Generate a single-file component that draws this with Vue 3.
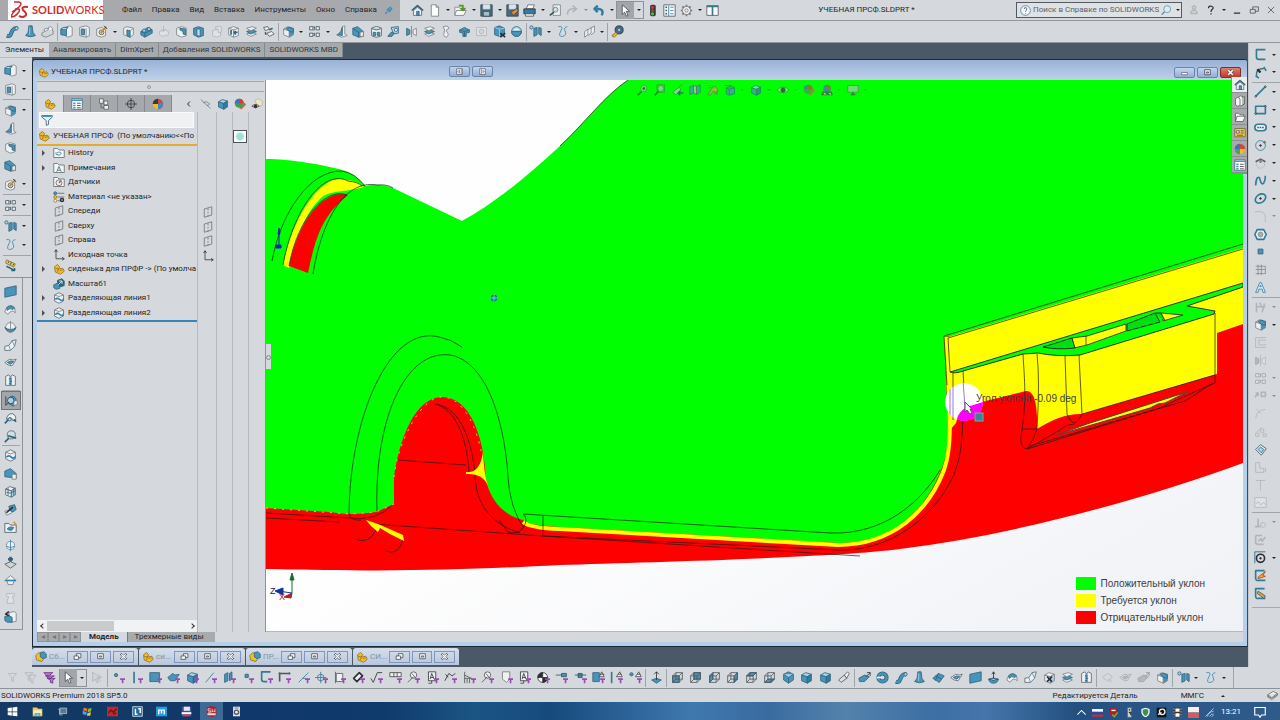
<script setup>
const D = '#32617a'
const B = '#4795bb'
const L = '#a8d3e6'
const W = '#eef1f3'
const K = '#2b2f33'
const G = '#7b8084'
const Y = '#f0bd2e'

const p = (d, fill = 'none', stroke = D, w = 1) =>
  `<path d="${d}" fill="${fill}" stroke="${stroke}" stroke-width="${w}" stroke-linejoin="round"/>`
const c = (x, y, r, fill = 'none', stroke = D, w = 1) =>
  `<circle cx="${x}" cy="${y}" r="${r}" fill="${fill}" stroke="${stroke}" stroke-width="${w}"/>`
const cube = (front, top, side, stroke = D) =>
  p('M2 5L9 7V15L2 12Z', front, stroke) + p('M2 5L7 2L14 4L9 7Z', top, stroke) + p('M9 7L14 4V12L9 15Z', side, stroke)
const wire = (extra) =>
  extra + p('M2 6H10V14H2ZM6 2H14V10H6ZM2 6L6 2M10 6L14 2M10 14L14 10M2 14L6 10', 'none', '#51575c')
const tag = '<path d="M10 9H16V11H14V15H12V11H10Z" fill="#9a4bb3"/>'

const icons = {
  sweep: p('M1 13C9 16 4 3 14 4', 'none', D, 5) + p('M1 13C9 16 4 3 14 4', 'none', B, 3) + c(13, 4, 2, L),
  loft: p('M6 1H10L11 9L14 13Q8 16 2 13L5 9Z', B) + p('M7 3V12', 'none', L),
  flange: p('M1 10L10 5L15 7V11L6 15L1 13Z', '#d3d6d8', G) + p('M4 8V5L7 4L9 5M9 6V3L12 2L14 4V7', W, G),
  extrude: p('M6 3L12 1L15 3V13L10 15L6 13Z', W, G) + p('M1 5L8 4V13L1 12Z', B) + p('M1 5L4 3L10 3L8 5', L),
  hole: p('M2 3L10 1L14 3V13L10 15L2 13Z', W, G) + p('M4 5H8V12H4Z', B) + p('M10 4V15', 'none', G),
  wizard: p('M2 5L8 3L13 6V13L8 15L2 13Z', W, G) + c(8, 9, 3, '#cfd5d8', '#555') + p('M7 10L14 2', 'none', '#c98b24', 2) + p('M11 1L15 5', 'none', K),
  blockA: p('M2 4L6 2L14 4V12L10 15L2 12Z', W, G) + p('M6 6L10 7V15L6 13Z', B) + p('M10 7L14 4', 'none', G),
  brick: p('M1 8L10 3L15 6V10L6 15L1 12Z', B) + p('M1 8L6 10L15 6M6 10V15', 'none', D) + c(5, 7, 2, L) + c(11, 5, 2, L),
  pushdown: p('M3 8L10 6L14 8V12L7 14L3 12Z', W, G) + p('M8 1V8M5 5L8 8L11 5', 'none', G),
  cutA: p('M2 4L8 2L14 4V13L8 15L2 12Z', W, G) + p('M6 4L13 5V12L10 11V8L6 6Z', B),
  cutB: p('M2 4L8 2L14 4V13L8 15L2 12Z', B) + p('M6 5H10V14L6 13Z', '#d5dadd', D),
  cutC: p('M3 7L9 5L13 7V13L8 15L3 13Z', W, G) + p('M7 2H14V9H10V5H7Z', W, G),
  lattice: p('M2 4L8 2L14 4V13L8 15L2 12Z', W, G) + p('M2 4L8 6L14 4M8 6V15', 'none', G) + p('M10 7V12M8 9H13M5 6V12', 'none', D, 2),
  stack: p('M2 11L9 9L14 11L7 14Z', W, G) + p('M2 8L9 6L14 8L7 11Z', B) + p('M2 4L9 2L14 4L7 7Z', W, G),
  move: p('M2 3L7 2L9 5L4 7ZM6 10L12 8L15 11L9 14Z', W, '#555') + p('M9 6L13 4M4 9L5 12', 'none', D, 2),
  fillet: cube(W, W, B, G) + p('M5 4Q10 1 14 5V9L9 8Z', B),
  pattern: p('M2 2H6V6H2ZM2 10H6V14H2ZM10 2H14V6H10ZM10 10H14V14H10Z', W, '#4a5055') + p('M6 3L8 2V6H6M6 11L8 10V13H6', L, D),
  rib: p('M2 12L8 10L9 2L12 1V11L15 13L8 15Z', W, G) + p('M3 12Q8 9 9 3V13Z', B),
  draft: p('M1 4L7 2L14 8V14L8 15L1 12Z', B) + p('M1 4L8 9V15M8 9L14 8', 'none', D) + p('M10 9L14 8V14L10 14Z', W, G),
  shell: p('M2 4Q8 0 14 4V13Q8 17 2 13Z', W, '#555') + p('M2 4Q8 8 14 4', L, '#555') + p('M4 9H7V13H4ZM9 9H12V13H9Z', B),
  wrap: p('M5 3L14 2V10L8 11Z', L) + p('M1 14L5 9L9 10L6 14Z', B) + c(11, 6, 2, W),
  mirror: p('M14 4V13L10 11V6Z', W, G) + p('M2 4V13L6 11V6Z', B) + p('M8 1V15', 'none', G),
  flex: p('M4 2Q10 0 11 4Q6 6 9 9Q12 12 8 15Q3 14 5 10Q7 6 4 2Z', W, G),
  dome: p('M2 6L8 3L14 6V9L10 10V14H6V10L2 9Z', B) + p('M2 6L8 8L14 6M8 8V14', 'none', D),
  ring: p('M2 3H14V13H2Z', W, G) + c(8, 8, 3, '#ccc', G),
  deleteFace: p('M2 3L8 1L14 4V12L8 14L2 12Z', B) + p('M2 3L8 5L14 4M8 5V14', 'none', L) + p('M9 10L15 15M15 10L9 15', 'none', K, 2),
  sphere: c(8, 8, 6, L) + p('M2 8A6 6 0 0 0 14 8Z', B) + p('M4 6Q8 1 12 6', W, L),
  ref: c(3, 3, 2, L) + p('M6 4V14L10 12V3ZM12 3V11L15 13V4Z', B),
  curve: p('M3 2Q10 1 6 7Q2 15 8 14Q14 13 11 7Q9 3 14 2', 'none', '#3282ad', 1),
  split3: p('M2 8L6 5V12L2 15ZM6 6L10 3V10L6 13M10 4L14 1V9L10 12', W, G),
  instant: c(10, 6, 5, '#426b88', '#333') + c(10, 6, 2, L) + p('M1 13L6 9L8 11L4 15Z', Y, '#7f6517'),
  ruler: p('M3 1L14 6L12 10L2 5Z', '#e9c965', '#8c7430') + p('M6 3L5 5M9 4L8 7M12 6L11 8', 'none', K) + p('M3 9L13 14M13 11V14H9', 'none', D, 2),
  plane: p('M1 4L15 1V12L1 15Z', B),
  sheet: p('M3 6Q8 1 13 6L14 12Q9 7 5 14L1 11Z', W, G) + p('M3 6Q8 1 13 6L11 8Q7 5 4 9Z', B),
  spin: c(8, 8, 6, W, G) + p('M1 8Q8 13 15 8L13 11Q8 15 3 11Z', B) + p('M8 0V15', 'none', G),
  bend: p('M1 9L6 8L10 2L15 1L13 9L8 14H1Z', W, '#5c656a') + p('M6 8L8 14M10 2L13 9', 'none', B),
  patch: p('M1 8L7 4L11 5L15 4L10 12L5 11Z', W, '#5c656a') + p('M4 8L8 6L12 7L8 10Z', B),
  zip: p('M2 3L6 1L8 4L10 1L14 3V14H2Z', W, '#5c656a') + p('M8 4V14', 'none', B, 3) + p('M6 6H9M7 9H10M6 12H9', 'none', D),
  analysis: p('M5 5Q9 0 13 5L15 11L10 15L5 12Z', B) + c(7, 8, 4, L, '#334') + p('M1 14L5 10M1 3V14', 'none', K, 1) + p('M11 9L15 8V13L11 14Z', W, G),
  magnet: p('M3 9Q4 2 10 2Q16 4 14 11L10 10Q10 6 7 8Z', W, '#4c5960') + p('M1 14L8 7M12 9L15 12', 'none', D, 2) + c(7, 9, 2, L),
  magnify: c(9, 6, 5, '#cfe1e8', '#5c656a') + p('M1 15L6 10M5 7L15 10', 'none', D, 2),
  splitLine: p('M2 4L8 1L14 4V12L8 15L2 12Z', W, '#5c656a') + p('M2 4L8 6L14 4', 'none', '#777') + p('M3 10Q6 7 9 10T14 9', 'none', '#3282ad', 2),
  wedge: p('M1 5L8 2L15 8V14L10 13L1 12Z', B) + p('M10 9H15V15H10Z', W, G),
  box3: cube(W, W, L, '#59636a') + p('M5 4V13M12 4V13M3 9L8 10L14 7', 'none', D),
  pipe: p('M1 10L8 8L10 12L3 15Z', W, G) + p('M6 4L13 2L15 8L11 11L7 9Z', B) + p('M3 12L11 5', 'none', K, 2),
  folder: p('M1 3H6L8 5H15V14H1Z', W, '#4c5960') + p('M4 10Q6 6 12 8Q10 13 6 11Z', B) + p('M12 1L15 5', 'none', '#df8f28', 2),
  pencilSphere: c(8, 8, 5, W, G) + p('M8 1V15M3 9Q8 12 13 9', 'none', '#3282ad'),
  press: p('M1 10L8 7L15 10L8 15Z', '#cfd4d7', '#555') + p('M8 1V7M5 4H11', 'none', D, 3),
  equator: p('M8 2L13 6L11 13L5 13L3 6Z', W, G) + p('M1 8H15', 'none', '#3282ad', 2),
  phone: p('M3 2H13V5L10 6L12 10V14H4V10L6 6L3 5Z', W, G),
  importBody: p('M6 3L13 2L15 4V14L8 15Z', W, G) + p('M1 8L6 7L10 9V15H4L1 13Z', B) + p('M6 2L2 5L6 7', 'none', K, 2),

  home: p('M3 8L8 4L13 8V14H3Z', W, '#536773') + p('M7 9H10V14H7Z', B) + p('M1 8L8 2L15 8', 'none', D, 2),
  page: p('M4 1H10L13 4V15H4Z', '#fbfcfc', '#777') + p('M10 1V4H13', 'none', '#777'),
  open: p('M1 14V4H6L8 6H13V8', W, '#888') + p('M3 8H15L12 14H1Z', '#fafbfb', '#777') + p('M6 2H11V7M8 5L11 8L14 5', 'none', '#53981d', 2),
  save: p('M1 1H15V15H1Z', '#456d82', '#34454e') + p('M4 1H12V6H4Z', '#dce4e8', '#dce4e8') + p('M4 9H12V15H4Z', '#a8bac3', '#34454e'),
  saveAll: p('M1 1H15V15H1Z', '#456d82', '#34454e') + p('M4 1H12V6H4Z', '#dce4e8', '#dce4e8') + p('M6 10L14 5L15 9L9 14Z', '#d28b45', '#52402b'),
  print: p('M4 6L6 1H14L12 6Z', '#f8f9f9', '#666') + p('M1 6H15V12H1Z', '#347c9d', K) + p('M3 12H13V15H3Z', W, '#555'),
  preview: p('M5 1H14V14H5Z', W, G) + c(8, 7, 3, '#cbdde5', '#677') + p('M1 14L6 10', 'none', '#355', 2),
  redo: p('M2 13Q1 5 12 6M8 2L13 6L8 10', 'none', G, 2),
  undo: p('M12 14Q16 5 4 6M7 2L3 6L7 10', 'none', '#347da2', 3),
  cursor: p('M4 1V13L7 10L9 15L11 14L9 9H13Z', '#fff', '#464b4f'),
  cursorOff: p('M2 1V13L5 10L7 14H9L7 9H11ZM8 3L13 8L9 8L12 13', '#cfcfd1', G),
  lights: '<rect x="5" y="1" width="7" height="14" rx="2" fill="#393635"/><circle cx="8" cy="4" r="2" fill="#d53434"/><circle cx="8" cy="8" r="2" fill="#765827"/><circle cx="8" cy="12" r="2" fill="#55b83f"/>',
  listing: p('M1 1H15V15H1Z', '#f7f8f8', '#555') + p('M7 2V15M9 4H13M9 8H13M9 12H13', 'none', '#3778aa') + p('M3 4H5M3 8H5M3 12H5', 'none', '#315a76', 2),
  gear: c(8, 8, 5, W, '#777', 1) + c(8, 8, 2, 'none', '#777') + p('M8 1V3M8 13V15M1 8H3M13 8H15M3 3L5 5M11 11L13 13M13 3L11 5M3 13L5 11', 'none', '#777', 2),
  panes: p('M1 2H15V14H1Z', '#fafafa', '#555') + p('M1 3H15M8 2V14', 'none', '#397793', 2),
  pin: p('M2 14L7 9M5 5L11 11M7 6L11 2L14 5L10 9Z', '#56a3c4', '#3b8cb3', 2),
  help: c(8, 8, 7, '#f7f9fa', '#2b6d92') + p('M6 6Q6 3 9 4Q11 5 9 8Q8 9 8 10M8 12V13', 'none', '#234', 1),
  search: c(9, 6, 5, '#d8edf6', '#56839a') + p('M1 14L5 10', 'none', '#56839a', 2),
  user: c(8, 4, 3, '#ccc', '#999') + p('M3 14Q2 8 8 8Q14 8 13 14Z', '#ccc', '#999'),
  question: p('M4 5Q4 1 9 2Q14 4 9 8Q8 9 8 11M8 13V15', 'none', K, 2),
  minimize: p('M3 13H13', 'none', K, 2),
  restore: p('M2 7H10V13H2ZM6 7V3H15V10H10', 'none', K),
  close: p('M3 3L13 13M13 3L3 13', 'none', K),

  part: p('M2 5L6 2L9 5L7 8L13 7L15 11L10 15L3 12Z', Y, '#8c6b12') + p('M3 7L7 8M7 8L6 12M9 10L13 9', 'none', '#8c6b12'),
  assembly: p('M1 6L5 2L9 5L7 8L12 10L9 14L2 12Z', Y, '#8c6b12') + p('M7 2L12 1L15 4V9L10 10L7 7Z', B),
  props: p('M1 1H15V15H1Z', '#fff', '#3c6680') + p('M1 3H15', 'none', B, 2) + p('M8 7H13M8 10H13M8 13H13', 'none', '#333') + p('M3 7H6M3 10H6M3 13H6', 'none', B, 2),
  config: p('M2 1H7V7H2ZM8 4H13V9H8ZM8 10H14V15H8Z', W, '#555') + p('M4 7V13H8', 'none', '#555'),
  target: c(8, 8, 5, 'none', K, 1) + p('M8 0V16M0 8H16', 'none', K, 1),
  ball: '<circle cx="8" cy="8" r="7" fill="#d84639"/><path d="M8 8V1A7 7 0 0 0 1 8Z" fill="#333b45"/><path d="M1 8A7 7 0 0 0 8 15V8Z" fill="#f0bd2e"/><path d="M8 15A7 7 0 0 0 14 5L8 8Z" fill="#4386c5"/>',
  ballPane: '<circle cx="8" cy="8" r="7" fill="#d84639"/><path d="M8 8V1A7 7 0 0 0 1 8Z" fill="#3c74b8"/><path d="M1 8A7 7 0 0 0 8 15V8Z" fill="#49a55a"/><path d="M8 15A7 7 0 0 0 15 8H8Z" fill="#f0bd2e"/>',
  chevron: p('M10 3L5 8L10 13', 'none', K, 2),
  hide: p('M1 2L14 14M4 6Q9 3 13 8Q11 10 9 10', 'none', '#707579'),
  cubeBlue: cube(B, L, '#2f7da5'),
  paint: '<circle cx="7" cy="7" r="6" fill="#3d9d58"/><path d="M7 1A6 6 0 0 0 1 7H7Z" fill="#3c74b8"/><path d="M7 7V1A6 6 0 0 1 13 7Z" fill="#d53e30"/><path d="M7 14L14 6L16 9L10 15Z" fill="#b7713b"/>',
  eyeBox: p('M5 3L10 1L15 4V10L9 11Z', '#efe4c0', '#b8b09a') + p('M1 11Q6 6 11 11Q6 15 1 11Z', W, '#444') + c(6, 11, 2, K, K),
  funnel: p('M1 2H15V4L10 9V14L7 15V9L1 4Z', '#e6f4fa', '#24566f') + p('M2 3H14', 'none', B, 2),
  history: p('M1 2H6L8 4H15V14H1Z', '#f5f6f6', '#5a6064') + p('M5 8Q8 5 11 8Q10 12 6 11M4 7V10H7', 'none', '#3583a9', 1),
  notes: p('M1 2H6L8 4H15V14H1Z', '#f5f6f6', '#5a6064') + p('M5 13L8 6L11 13M6 11H10', 'none', '#28627e', 1),
  sensor: p('M1 2H6L8 4H15V14H1Z', '#f5f6f6', '#5a6064') + c(8, 9, 4, W, '#555') + p('M8 9L10 7', 'none', '#c22', 2),
  material: c(3, 3, 2, B) + c(3, 8, 2, Y, '#a07015') + c(3, 13, 2, W, '#a07015') + p('M6 3H15M6 8H15M6 13H9', 'none', '#555') + c(12, 12, 2, W, K, 2),
  planeRef: p('M3 4L13 1V12L3 15ZM8 3V6M8 8V10M8 12V14', 'none', '#666c70'),
  origin: p('M4 1V13H15M2 4L4 1L6 4M12 11L15 13L12 15', 'none', K, 1),
  scale: p('M1 9L6 7L9 10V14L4 15L1 13Z', B) + p('M6 3L12 1L15 4V10L10 12L6 7Z', '#286686') + p('M7 9L12 4M8 4H12V8', 'none', '#fff', 1),

  sketch: p('M14 2H3V11Q3 14 6 14H14', 'none', '#347995', 2),
  dimension: p('M3 12Q2 3 12 3M2 12L6 15M12 1L15 6', 'none', '#347995', 2) + p('M4 4L8 8', 'none', K, 3),
  line: p('M2 14L14 2', 'none', '#347995', 2) + c(2, 14, 1, W, K) + c(14, 2, 1, W, K),
  rect: p('M2 4H14V13H2Z', 'none', '#347995', 2) + c(2, 13, 1, W, K) + c(14, 4, 1, W, K),
  slot: p('M5 4H11A4 4 0 0 1 11 12H5A4 4 0 0 1 5 4Z', W, '#347995', 2) + p('M5 7V9M11 7V9M7 8H9', 'none', '#555', 2),
  circle: c(8, 8, 6, 'none', '#347995', 1) + c(8, 8, 1, K, K) + c(13, 4, 1, W, K),
  arc: p('M2 7L8 4L14 7', 'none', '#555', 2) + '<circle cx="8" cy="10" r="5" fill="none" stroke="#aaa" stroke-dasharray="2 1"/>' + c(8, 7, 1, L, '#555'),
  spline: p('M2 14Q3 1 7 5Q9 15 12 11Q14 8 14 2', 'none', '#347995', 2),
  ellipse: '<ellipse cx="8" cy="8" rx="7" ry="5" transform="rotate(-35 8 8)" fill="none" stroke="#347995" stroke-width="2"/>' + c(8, 8, 1, K, K),
  corner: p('M1 2H7Q14 2 14 10V15', 'none', G, 1),
  polygon: p('M4 2H12L15 8L12 14H4L1 8Z', '#e9f3f7', '#347995', 2) + c(8, 8, 3, '#a8afb3', '#888'),
  point: p('M5 5H11V11H5Z', B),
  gridPlane: p('M2 4H14V13H2M5 2V15M9 2V15M2 8H14', 'none', '#888'),
  letter: p('M2 14L7 2H9L14 14H11L10 10H6L5 14ZM7 7H9L8 5Z', '#d9edf5', '#3a7fa0'),
  trim: p('M3 2V14M2 7H14M7 2L9 6M10 14L13 3', 'none', G, 2),
  offset: p('M15 2H2V14H15M15 5H6V11H15', 'none', G, 1),
  moveSketch: p('M1 10L5 5M2 5H5V9M9 4H14V9H9Z', 'none', G, 2),
  tangent: p('M2 14Q3 4 14 3M3 3L9 8', 'none', G),
  nodes: p('M2 10H6V14H2ZM8 5H12V9H8ZM11 11H15V14H11ZM3 9L10 3', 'none', G),
  diamond: p('M2 8L8 2L15 7L9 15Z', '#e5eff3', '#345565') + p('M5 8L8 5L12 8L9 12Z', L),
  lshape: p('M2 2H7V9H12V14H2ZM14 8V14', 'none', G),
  tee: p('M2 3H14M8 3V15', 'none', G),
  image: p('M1 2H15V14H1ZM2 10L5 7L8 11L12 8L15 11', W, G),
  relation: p('M1 13H8M5 3V13', 'none', G, 2) + c(11, 11, 3, 'none', G),
  repair: p('M2 3H10M2 3V13L5 14H12M5 10L9 7L10 10L14 5', 'none', G, 2),
  quickSnap: p('M1 15V1H14', 'none', '#245e7a', 1) + c(8, 9, 5, 'none', K, 2) + c(8, 9, 1, K, K),
  rapid: p('M13 2H2V11Q2 15 6 14H14', 'none', '#347995', 2) + p('M5 10L14 3L11 8L14 9L5 12Z', '#f4a63a', '#9e4c17'),
  sketchMeasure: p('M13 2H2V11Q2 15 6 14H14', 'none', '#347995', 2) + p('M5 5L14 11L12 14L4 8Z', '#cba54a', '#555'),

  funnelGray: p('M3 3H13L9 8V13L7 12V8Z', '#d8dadd', G),
  funnelPair: p('M1 2H11L7 7V12L5 11V7ZM5 5H15L11 10V15L9 14V10Z', '#d8dadd', G),
  funnelAll: p('M1 2H12L7 6H5ZM3 6H14L9 9H7ZM5 9H15L12 11V15L9 14V11Z', '#b07cc4', '#702b8c'),
  fVertex: c(5, 5, 2, B) + tag,
  fEdge: p('M5 1V15', 'none', '#347995', 2) + tag,
  fFace: p('M1 2H13V13H1Z', B) + tag,
  fSurface: p('M1 8L7 3L10 5L15 4L10 12L4 12Z', B) + tag,
  fBody: cube(B, L, '#2f7da5') + tag,
  fAxis: p('M2 14L12 2', 'none', '#347995', 1) + tag,
  fPlane: p('M2 4V14L6 12V2ZM8 3V12L11 10V1Z', B) + tag,
  fPoint: p('M5 4H9V8H5Z', B) + tag,
  fSketch: p('M13 1H2V10Q2 13 5 13H9', 'none', '#347995', 2) + tag,
  fSegment: p('M2 13V3H14', 'none', '#555', 2) + c(2, 3, 1, B) + c(14, 3, 1, B) + tag,
  fMid: p('M2 14L14 2M7 9H11', 'none', '#347995', 1) + tag,
  fCenter: c(7, 8, 4, 'none', '#347995') + p('M7 1V15M0 8H14', 'none', '#347995') + tag,
  fDatum: p('M3 1V15M4 3H12V13H4Z', W, '#555') + tag,
  fDim: p('M2 9L9 2L13 6L6 13Z', W, K, 2) + tag,
  fFinish: p('M1 9L4 14L9 2H15', 'none', K, 1) + tag,
  fTol: p('M1 2H15V7H1ZM6 2V7M10 2V7', W, '#444') + tag,
  fWeld: c(8, 5, 4, W, '#555') + p('M1 14L8 7M6 3L11 9', 'none', '#555') + tag,
  fNote: p('M3 1H12V12H3ZM7 12V15H3', W, '#333') + p('M5 10L7 3L10 10M6 8H9', 'none', K) + tag,
  fThread: p('M1 12L6 3L10 6L14 3M2 4L5 8', 'none', K, 1) + tag,
  fHatch: p('M2 1V15M2 5L10 9M5 15V9M8 15V9M2 9H11', 'none', '#555') + tag,
  fBlock: p('M3 1H12V10L8 14L3 10Z', W, '#777') + tag,
  fCog: c(7, 8, 6, '#fff', K) + p('M7 8V2A6 6 0 0 0 1 8ZM7 8V14A6 6 0 0 0 13 8Z', K, K) + tag,
  fConn: p('M1 5H8M8 3H14V7H8Z', B, '#34505f', 1) + tag,
  fConn2: p('M1 5H15M5 3H10V8H5Z', B, '#34505f', 1) + tag,
  fMate: p('M1 2H9V13H1Z', B) + p('M12 1L15 7H9ZM10 4H15', W, '#444') + tag,
  fMate2: p('M2 1V15', 'none', '#347995', 2) + p('M12 1L15 7H8ZM10 4H14', W, '#444') + tag,
  fMate3: c(3, 4, 2, B) + p('M12 1L15 7H8ZM10 4H14', W, '#444') + tag,
  normal: p('M2 11L8 9L14 11L8 15Z', B) + p('M8 11V1M5 4L8 1L11 4', 'none', K),
  vFront: wire(p('M2 6H10V14H2Z', B)),
  vBack: wire(p('M6 2H14V10H6Z', B)),
  vLeft: wire(p('M2 6L6 2V10L2 14Z', B)),
  vRight: wire(p('M10 6L14 2V10L10 14Z', B)),
  vTop: wire(p('M2 6L6 2H14L10 6Z', B)),
  vBottom: wire(p('M2 14L6 10H14L10 14Z', B)),
  iso: p('M8 1L14 4V11L8 15L2 11V4Z', B) + p('M2 4L8 8L14 4M8 8V15', L, D),
  camera: p('M2 11L9 5L12 9L5 14Z', '#dedfe1', '#555') + p('M9 5L13 1L15 3L12 9Z', W, '#555'),
  sExtrude: p('M1 9L8 5L14 7L8 13L2 13Z', B) + p('M10 7L15 2M11 2H15V6', 'none', K, 1),
  sRevolve: c(8, 8, 5, 'none', D, 5) + c(8, 8, 5, 'none', B, 3) + p('M1 8H7', 'none', W, 2),
  sFill: p('M1 9L8 3L15 6L9 14Z', B) + p('M4 6L12 10M8 3L4 12', 'none', D),
  sCap: p('M2 10Q8 7 14 10Q13 15 8 15Q3 15 2 10Z', B) + p('M2 10Q8 13 14 10M8 1V9M6 4L8 1L10 4', W, K),
  sDelete: cube(W, W, L, G) + p('M5 7L11 13M11 7L5 13', 'none', K, 2),
  sMove: p('M2 8L8 3L14 7L9 13ZM8 9L14 14', '#ddd', G),

  viewBox: p('M3 5L10 3L14 5V13L7 15L3 13Z', B) + p('M3 5L7 7L14 5M7 7V15', 'none', D) + p('M1 2H10', 'none', '#555'),
  viewEye: p('M0 8Q8 0 16 8Q8 15 0 8Z', '#cdd8ce', '#46724f') + c(8, 8, 3, '#24502b', '#24502b'),
  viewPen: p('M1 14L8 4L11 3L14 7L13 14L9 9L4 15Z', '#c3ad4a', '#626443') + p('M2 2H8M1 5H6M10 14L14 9', 'none', '#666'),
  zoomFit: c(9, 6, 4, '#b8d8bf', '#47744f') + p('M1 15L6 10M7 6H11M9 4V8', 'none', '#31583d', 2),
  zoomArea: p('M4 1H14V11H4Z', 'none', '#47744f') + c(9, 6, 4, '#98d8a1', '#47744f') + p('M1 15L6 10', 'none', '#31583d', 2),
  viewPrev: p('M1 11L10 4L12 9L5 14ZM9 3L14 1', '#b6ccbd', '#47744f') + p('M15 12H9M11 9L8 12L11 15', 'none', '#24576d', 2),
  section: p('M1 4L6 2V12L1 14ZM10 3L15 1V11L10 14Z', B) + p('M6 2L10 3V14L6 12Z', '#a9c8b3', '#555'),
  scene: '<circle cx="8" cy="6" r="5" fill="#3f75ae"/><path d="M8 6V1A5 5 0 0 1 12 9Z" fill="#d2452e"/><path d="M2 10H14L16 15H0Z" fill="#3d5f45"/><path d="M3 12H6V15M10 12H13V15" fill="#d6ded8"/>',
  monitor: p('M1 2H15V11H1Z', '#9ccca2', '#4a7b51') + p('M8 11V14M5 14H11', 'none', '#365f3c', 2),
  library: p('M2 5L5 3L8 5V14L5 15L2 13ZM6 3L9 1L12 3V13L8 15M11 3L14 2V12L12 13', '#f5f5f5', '#555'),
  folderOpen: p('M2 14V3H6L8 5H13V7', '#f4f4f4', '#555') + p('M4 7H15L12 14H2Z', '#f9f9f9', '#555'),
  palette: p('M1 2H15V13H1Z', '#f0c649', '#6e652f') + p('M3 5H7V8H3ZM9 5H13M9 8H13M4 11H12', '#fff', '#444', 1),

  windows: '<path d="M1 3L7 2V8H1ZM8 2L15 1V8H8ZM1 9H7V14L1 13ZM8 9H15V15L8 14Z" fill="#fff"/>',
  explorer: '<path d="M1 2H7L9 4H15V15H1Z" fill="#edc955"/><path d="M2 6H14V12H2Z" fill="#f9ecb0"/><path d="M4 10H12V15H9V12H7V15H4Z" fill="#54b5d8"/>',
  pc: '<path d="M4 3H14V11H4Z" fill="#56798c" stroke="#c4d4dc"/><path d="M2 5H4V13H8" fill="none" stroke="#c4d4dc"/>',
  flag7: '<path d="M3 2L8 4L7 8L1 6Z" fill="#e86d3a"/><path d="M9 4L14 3L13 8L8 9Z" fill="#7dbb42"/><path d="M1 7L7 9L6 13L1 12Z" fill="#4ca4d5"/><path d="M8 10L13 9L12 14L7 14Z" fill="#edc443"/>',
  redApp: '<path d="M0 1H16V15H0Z" fill="#c1282c"/><path d="M2 10L6 6L9 9L14 4M9 12L13 10" fill="none" stroke="#641518" stroke-width="2"/>',
  lens: '<path d="M1 1H15V15H1Z" fill="#23689a" stroke="#fff"/><path d="M5 4V12H8M9 4H12V10" fill="none" stroke="#fff" stroke-width="2"/>',
  maxthon: '<path d="M0 1H16V15H0Z" fill="#219be4"/><path d="M4 12V6H12V12M8 6V11" fill="none" stroke="#fff" stroke-width="2"/>',
  disk: '<path d="M1 1H15V15H1Z" fill="#3f4da0"/><path d="M4 1H13V7H4Z" fill="#e7e8f0"/><path d="M1 9H15V12H1Z" fill="#fff"/><path d="M3 12H13V15H3Z" fill="#c74b4b"/>',
  swApp: '<path d="M1 2L8 0L15 2V14L8 16L1 14Z" fill="#b51b20"/><path d="M3 4H7M3 4V7H7V9H3M9 4V9L11 7L13 9V4" fill="none" stroke="#fff"/><path d="M2 12H14" stroke="#f1d5d5" stroke-width="3"/>',
  recorder: '<path d="M3 1H13V15H3Z" fill="#e1e4e5"/><circle cx="8" cy="9" r="4" fill="#555"/><circle cx="8" cy="9" r="2" fill="#eee"/><path d="M5 3H11" stroke="#555"/>',
  up: '<path d="M2 11L8 5L14 11" fill="none" stroke="#fff" stroke-width="1.500"/>',
  russia: '<path d="M0 3H16V7H0Z" fill="#fff"/><path d="M0 7H16V11H0Z" fill="#254aa5"/><path d="M0 11H16V14H0Z" fill="#d52b2b"/>',
  swTray: '<path d="M2 3L8 1L14 3V10L8 15L2 10Z" fill="#b51b20"/><path d="M5 5H11" stroke="#fff" stroke-width="2"/><path d="M6 11L9 14L14 8" fill="none" stroke="#55c34a" stroke-width="2"/>',
  usb: '<path d="M5 1H11V15H5Z" fill="#cdd2d5" stroke="#5c6266"/><path d="M7 4H9M7 8H10V12" stroke="#333" fill="none" stroke-width="2"/>',
  shield: '<path d="M8 1L14 3V8Q13 13 8 15Q3 13 2 8V3Z" fill="#f4f7f4"/><path d="M8 3L12 4V8Q11 12 8 13Q5 12 4 8V4Z" fill="#349251"/>',
  steam: '<path d="M1 1H15V15H1Z" fill="#111"/><circle cx="9" cy="7" r="4" fill="none" stroke="#eee" stroke-width="2"/><path d="M3 11L8 8" stroke="#eee" stroke-width="2"/>',
  film: '<path d="M2 1H14V15H2Z" fill="#333"/><path d="M5 2H11V7H5ZM5 9H11V14H5Z" fill="#fff"/><path d="M3 2V15M13 2V15" stroke="#fff" stroke-dasharray="2 2"/>',
  redWhite: '<path d="M0 0H16V8H0Z" fill="#f7eeee"/><path d="M0 8H16V16H0Z" fill="#cc5f5d"/>',
  signal: '<path d="M2 14L14 2M5 14Q6 8 14 6M8 14Q10 10 14 10M11 14L14 12" fill="none" stroke="#d8e3ec"/>',
  notify: '<path d="M1 2H15V12H10L8 15L6 12H1Z" fill="none" stroke="#fff" stroke-width="1.500"/>',
  stackGray: p('M1 7L9 2L15 5L7 11ZM1 7V10L7 14L15 8V5M1 9L7 12L15 7', '#f1f1f1', '#555'),
}

// "|" is a separator, a trailing "v" adds a drop-down arrow, "-" greys the icon out, "*" marks it as pressed
const parse = (text) =>
  text.trim().split(/\s+/).map((token) => {
    if (token === '|') return { sep: true }
    const [, name, flags] = token.match(/^([a-zA-Z0-9]+)(?::(.*))?$/)
    const f = flags || ''
    return { name, drop: f.includes('v'), off: f.includes('-'), on: f.includes('*') }
  })

const standardBar = parse('home page:v open:v save:v saveAll print:v preview redo:v- undo:v cursor:v* lights listing gear:v panes')
const featureBar = parse('sweep loft flange | extrude hole wizard:v blockA brick pushdown:- cutA cutB cutC:- lattice stack move | fillet:v pattern:v rib draft shell wrap mirror stack flex dome ring:- deleteFace sphere | ref:v curve:v split3:v | instant')
const leftTop = parse('extrude:v hole:v | fillet:v rib cutA draft wizard:v | pattern:v | ref:v curve:v | ruler')
const leftBottom = parse('plane sheet spin bend patch zip | analysis:* magnet magnify | splitLine wedge box3 pipe folder pencilSphere press equator phone:- importBody')
const rightBar = parse('sketch:v dimension:v | line:v rect:v slot:v circle:v arc:v spline:v ellipse:v corner:v- polygon point gridPlane letter | trim:v- fillet:v offset:- mirror:- pattern:v- moveSketch:v- tangent:- nodes:- diamond lshape:- tee:- image:- | relation:v- repair:- quickSnap:v rapid sketchMeasure')
const filterBar = parse('funnelGray:- funnelPair:- funnelAll cursor:v* cursorOff:- | fVertex fEdge fFace fSurface fBody fAxis fPlane fPoint fSketch fSegment fMid fCenter fDatum fDim fFinish fTol fWeld fNote fThread fHatch fWeld fBlock fNote fCog fConn fConn2 fMate fMate2 fMate3 | normal | vFront vBack vLeft vRight vTop vBottom iso cubeBlue cubeBlue camera | sExtrude sRevolve sweep loft sFill patch plane sCap sheet bend sDelete stack zip | sMove:- patch:- sExtrude:- fillet | ref:v curve:v')
const viewBar = parse('zoomFit zoomArea viewPrev section viewPen viewBox:v cubeBlue:v viewEye:v paint scene:v monitor:v')

const menus = ['Файл', 'Правка', 'Вид', 'Вставка', 'Инструменты', 'Окно', 'Справка']
const ribbonTabs = ['Элементы', 'Анализировать', 'DimXpert', 'Добавления SOLIDWORKS', 'SOLIDWORKS MBD']
const panelTabs = ['part', 'props', 'config', 'target', 'ball']
const tree = [
  { icon: 'history', text: 'History', open: true },
  { icon: 'notes', text: 'Примечания', open: true },
  { icon: 'sensor', text: 'Датчики' },
  { icon: 'material', text: 'Материал <не указан>' },
  { icon: 'planeRef', text: 'Спереди', mark: 'planeRef' },
  { icon: 'planeRef', text: 'Сверху', mark: 'planeRef' },
  { icon: 'planeRef', text: 'Справа', mark: 'planeRef' },
  { icon: 'origin', text: 'Исходная точка', mark: 'origin' },
  { icon: 'part', text: 'сиденька для ПРФР -> (По умолча', open: true },
  { icon: 'scale', text: 'Масштаб1' },
  { icon: 'splitLine', text: 'Разделяющая линия1', open: true },
  { icon: 'splitLine', text: 'Разделяющая линия2', open: true },
]
const paneTabs = ['home', 'library', 'folderOpen', 'palette', 'ballPane', 'props']
const legend = [
  { tone: 'green', text: 'Положительный уклон' },
  { tone: 'yellow', text: 'Требуется уклон' },
  { tone: 'red', text: 'Отрицательный уклон' },
]
const docs = [
  { icon: 'assembly', text: 'Сб...' },
  { icon: 'part', text: 'си...' },
  { icon: 'assembly', text: 'ПР...' },
  { icon: 'part', text: 'СИ...' },
]
const apps = [
  { icon: 'windows' }, { icon: 'explorer' }, { icon: 'pc' }, { icon: 'flag7' }, { icon: 'redApp' },
  { icon: 'lens' }, { icon: 'maxthon', run: true }, { icon: 'disk', run: true }, { icon: 'swApp', run: true, on: true }, { icon: 'recorder', run: true },
]
const tray = ['up', 'russia', 'swTray', 'usb', 'shield', 'steam', 'film', 'redWhite', 'signal']
</script>

<template>
  <div class="app">
    <header class="titlebar">
      <div class="brand">
        <div class="logo">
          <svg class="ds" viewBox="0 0 18 18" aria-hidden="true">
            <path d="M3 1H8Q12 2 8 6L1 11M4 8Q11 7 7 12Q4 16 0 16Q1 12 6 8" fill="none" stroke="#cf2b2e" stroke-width="1.500" />
            <path d="M17 6Q10 5 12 9Q17 13 14 15Q12 17 8 15" fill="none" stroke="#cf2b2e" stroke-width="2" />
          </svg>
          <span class="word"><b>SOLID</b>WORKS</span>
        </div>
        <nav class="menus">
          <button v-for="m in menus" :key="m">{{ m }}</button>
        </nav>
        <button class="ico pin" aria-label="Закрепить"><svg viewBox="0 0 16 16" v-html="icons.pin" /></button>
      </div>
      <div class="bar standard">
        <div v-for="(t, i) in standardBar" :key="i" class="tool" :class="{ off: t.off, on: t.on }">
          <button class="ico" :aria-label="t.name"><svg viewBox="0 0 16 16" v-html="icons[t.name]" /></button>
          <button v-if="t.drop" class="caret" :aria-label="t.name + ' ▾'"></button>
        </div>
      </div>
      <div class="doc-name">УЧЕБНАЯ ПРСФ.SLDPRT *</div>
      <label class="search">
        <svg viewBox="0 0 16 16" v-html="icons.help" />
        <input type="text" placeholder="Поиск в Справке по SOLIDWORKS" aria-label="Поиск в Справке" />
        <svg viewBox="0 0 16 16" v-html="icons.search" />
        <i class="caret"></i>
      </label>
      <div class="window-tools">
        <button class="ico" aria-label="Вход"><svg viewBox="0 0 16 16" v-html="icons.user" /></button>
        <button class="ico" aria-label="Справка"><svg viewBox="0 0 16 16" v-html="icons.question" /></button>
        <button class="caret" aria-label="Варианты справки"></button>
        <button v-for="n in ['minimize', 'restore', 'close']" :key="n" class="ico" :aria-label="n"><svg viewBox="0 0 16 16" v-html="icons[n]" /></button>
      </div>
    </header>

    <div class="command-row">
      <div class="bar features">
        <template v-for="(t, i) in featureBar" :key="i">
          <span v-if="t.sep" class="sep"></span>
          <div v-else class="tool" :class="{ off: t.off }">
            <button class="ico" :aria-label="t.name"><svg viewBox="0 0 16 16" v-html="icons[t.name]" /></button>
            <button v-if="t.drop" class="caret" :aria-label="t.name + ' ▾'"></button>
          </div>
        </template>
      </div>
    </div>

    <div class="body">
      <div class="main">
        <nav class="ribbon">
          <button v-for="(t, i) in ribbonTabs" :key="t" :class="{ active: i === 0 }">{{ t }}</button>
        </nav>
        <div class="work">
          <aside class="left">
            <div class="vbar top">
              <template v-for="(t, i) in leftTop" :key="i">
                <span v-if="t.sep" class="sep"></span>
                <div v-else class="tool">
                  <button class="ico" :aria-label="t.name"><svg viewBox="0 0 16 16" v-html="icons[t.name]" /></button>
                  <button v-if="t.drop" class="caret" :aria-label="t.name + ' ▾'"></button>
                </div>
              </template>
            </div>
            <div class="vbar bottom">
              <template v-for="(t, i) in leftBottom" :key="i">
                <span v-if="t.sep" class="sep"></span>
                <div v-else class="tool" :class="{ off: t.off, on: t.on }">
                  <button class="ico" :aria-label="t.name"><svg viewBox="0 0 16 16" v-html="icons[t.name]" /></button>
                </div>
              </template>
            </div>
          </aside>

          <div class="mdi">
            <section class="doc">
              <div class="doc-title">
                <svg viewBox="0 0 16 16" v-html="icons.part" />
                <span>УЧЕБНАЯ ПРСФ.SLDPRT *</span>
                <div class="pane-buttons">
                  <button aria-label="Предыдущая область"><svg viewBox="0 0 16 16"><path d="M3 3H13V13H3ZM8 5V11M6 6L5 8L6 10M11 4V12" fill="#fff" stroke="#334" /></svg></button>
                  <button aria-label="Следующая область"><svg viewBox="0 0 16 16"><path d="M3 3H13V13H3ZM6 4V12M9 6L11 8L9 10Z" fill="#fff" stroke="#334" /></svg></button>
                </div>
                <div class="doc-buttons">
                  <button aria-label="Свернуть"><svg viewBox="0 0 16 16"><path d="M3 8H13V12H3Z" fill="#fff" stroke="#445" /></svg></button>
                  <button aria-label="Развернуть"><svg viewBox="0 0 16 16"><path d="M3 3H13V12H3ZM6 7H10V9H6Z" fill="#fff" stroke="#445" stroke-width="1.500" /></svg></button>
                  <button class="close" aria-label="Закрыть"><svg viewBox="0 0 16 16"><path d="M4 4L12 12M12 4L4 12" stroke="#544" stroke-width="5" /><path d="M4 4L12 12M12 4L4 12" stroke="#fff" stroke-width="3" /></svg></button>
                </div>
              </div>
              <div class="doc-body">
                <aside class="panel">
                  <div class="grip"><i></i></div>
                  <div class="panel-head">
                    <button v-for="(n, i) in panelTabs" :key="n" class="ptab" :class="{ active: i === 0 }" :aria-label="n"><svg viewBox="0 0 16 16" v-html="icons[n]" /></button>
                    <div class="display-tools">
                      <button v-for="n in ['chevron', 'hide', 'cubeBlue', 'paint', 'eyeBox']" :key="n" class="ico" :aria-label="n"><svg viewBox="0 0 16 16" v-html="icons[n]" /></button>
                    </div>
                  </div>
                  <div class="panel-cols">
                    <div class="tree-col">
                      <label class="filter">
                        <svg viewBox="0 0 16 16" v-html="icons.funnel" />
                        <input type="text" aria-label="Фильтр дерева" />
                      </label>
                      <div class="root">
                        <svg viewBox="0 0 16 16" v-html="icons.part" />
                        <span>УЧЕБНАЯ ПРСФ&nbsp; (По умолчанию&lt;&lt;По</span>
                      </div>
                      <ul class="tree">
                        <li v-for="n in tree" :key="n.text">
                          <i class="twisty" :class="{ shown: n.open }"></i>
                          <svg viewBox="0 0 16 16" v-html="icons[n.icon]" />
                          <span>{{ n.text }}</span>
                        </li>
                      </ul>
                      <div class="hscroll"><i class="arr l"></i><i class="thumb"></i><i class="arr r"></i></div>
                    </div>
                    <div class="display-col first">
                      <ul class="tree">
                        <li v-for="n in tree" :key="n.text"><svg v-if="n.mark" viewBox="0 0 16 16" v-html="icons[n.mark]" /></li>
                      </ul>
                    </div>
                    <div class="display-col"></div>
                    <div class="display-col look"><i class="swatch"></i></div>
                    <div class="display-col last"></div>
                  </div>
                </aside>

                <div class="viewport">
                  <svg class="model" viewBox="266 80 977 551" preserveAspectRatio="xMidYMid slice" role="img" aria-label="Анализ уклона">
                    <defs>
                      <linearGradient id="sky" x1="0" y1="0" x2="1" y2="1">
                        <stop offset="0.500" stop-color="#fefefe" />
                        <stop offset="1" stop-color="#eff1f6" />
                      </linearGradient>
                      <clipPath id="spot"><circle cx="964" cy="402" r="19" /></clipPath>
                    </defs>
                    <rect x="266" y="80" width="977" height="551" fill="url(#sky)" />
                    <path fill="#f00" d="M266 300H1243V463C1150 497 1020 534 900 549C830 558 650 562 560 565C460 570 400 572 266 569Z" />
                    <path fill="#0f0" d="M266 159C290 159 325 165 342 170C354 173 360 180 365 186C373 184 383 184 393 188L462 221C490 206 522 181 560 146C585 123 604 96 628 80H1243V300L944 337L947 400C949 425 950 450 941 470C925 512 890 544 838 543L560 527C535 525 527 524 523 520C505 516 491 502 486 480C485 445 473 397 442 397C415 397 399 440 394 477V504L376 512Q350 516 330 512L266 508Z" />
                    <path fill="none" stroke="#ff0" stroke-width="4" d="M523 522Q530 528 560 529L838 545C892 545 928 512 944 470C953 445 950 412 946 337" />
                    <path class="edge" d="M628 80C604 96 585 123 560 146" />
                    <path class="edge" d="M523 514L830 533C886 535 922 500 940 470M543 536L838 550C900 552 944 504 956 469C963 450 963 420 963 400M373 524L543 536L860 556" />

                    <path fill="#ff0" d="M283 265C293 215 323 171 347 180Q358 181 364 187C345 193 330 189 320 199C303 215 297 240 289 268Z" />
                    <path fill="#f00" d="M289 266C297 224 323 188 348 195C323 215 316 235 308 273Z" />
                    <path class="edge" d="M272 261C281 212 310 170 342 171Q355 173 365 186M283 265C293 210 323 168 348 181Q358 182 362 186M289 266C298 216 327 187 347 195M313 274C321 224 343 179 377 185Q387 184 393 188" />

                    <path class="edge" d="M349 513C350 418 389 324 439 337Q451 339 462 347M377 511C374 415 408 344 455 356C497 370 507 452 508 478Q510 507 523 527M398 460L466 465M435 404C462 407 472 445 475 473C475 508 495 525 520 533M438 405C459 413 467 443 469 472M266 513L350 518Q375 522 394 504M266 518L340 522M349 513Q350 521 361 520M523 528Q517 535 508 532L499 520M543 536V515M523 514Q529 519 523 528M386 551Q398 556 403 540M355 539Q369 545 376 530" />
                    <path fill="none" stroke="#dd0" stroke-dasharray="2 6" d="M266 508L350 514L376 512L394 504M394 477C397 445 420 397 442 397C466 397 481 436 484 470" />
                    <path fill="#ff0" d="M366 520L378 524L403 535L404 541L390 534L380 528L378 532L371 526ZM466 474V472Q480 474 483 452Q484 475 488 486Q483 473 466 474Z" />

                    <path fill="#ff0" d="M948 337L1243 248V324L1217 333V374L1082 414Q1062 413 1037 429Q1038 390 1026 391L970 405Q958 411 956 423L950 430Z" />
                    <path class="edge" d="M944 336L1243 244M948 338L1243 249M948 338L950 372M944 336L947 385M953 372V420M963 371L965 405" />
                    <path fill="#0f0" stroke="#333" d="M950 372L1243 283V287L1187 306L1215 311L1214 314L1080 355Q1057 357 1038 353L1023 354L963 371Q955 374 950 372Z" />
                    <path fill="#ff0" stroke="#444" d="M1072 338L1087 336L1126 324V331L1087 345L1074 348ZM1161 313L1183 315L1163 321Z" />
                    <path fill="#00e010" stroke="#333" d="M1043 347L1072 338L1075 348Q1057 350 1043 347ZM1127 324L1155 313L1160 322L1127 331ZM1155 313L1161 313L1165 321" />
                    <path class="edge" d="M1086 336V345M1023 354C1024 375 1027 396 1022 430Q1018 448 1027 449L1160 408Q1180 398 1215 383V313M1037 354Q1040 380 1037 429M1065 356L1067 414Q1074 431 1082 414L1079 355M1037 429Q1035 438 1027 449L1060 430Q1066 424 1074 424M1022 429H1037M1030 446L1185 401L1213 383M1082 414L1215 375" />
                    <path fill="#ff0" stroke="#444" d="M1057 435L1087 424L1187 392L1165 403L1158 404L1150 408Z" />

                    <g clip-path="url(#spot)">
                      <circle cx="964" cy="402" r="19" fill="#fff" />
                      <path fill="#f0f" d="M956 425Q956 411 970 406L990 400V430H956Z" />
                      <path fill="none" stroke="#97d" d="M950 380V425M953 380V425M963 380L965 408" />
                    </g>
                    <path fill="#f4f4f4" stroke="#555" d="M965 402V412L967 410L970 414L972 413L970 409H972Z" />
                    <rect x="975" y="413" width="8" height="8" fill="#3f8298" stroke="#7ba7b5" />
                    <text class="readout" x="976" y="402">Угол уклона -0.09 deg</text>

                    <path fill="#12b" stroke="#12b" d="M279 230V246M278 234L279 228L280 234ZM276 245H281V248H276Z" />
                    <circle cx="494" cy="298" r="3" fill="#298b78" stroke="#146d72" />
                    <path d="M490 298H498M494 294V301" stroke="#57d2c8" />
                    <path fill="#157028" stroke="#157028" d="M292 593V576M290 580L292 573L294 580Z" />
                    <path fill="#113399" stroke="#113399" d="M292 593L278 591M283 588L275 591L283 595Z" />
                    <path fill="#a22" stroke="#a22" d="M292 593L284 597L291 598Z" />
                    <text class="axis" x="270" y="594">Z</text>
                    <text class="axis x" x="279" y="600">X</text>
                  </svg>
                  <i class="handle"></i>
                  <div class="bar view">
                    <div v-for="(t, i) in viewBar" :key="i" class="tool">
                      <button class="ico" :aria-label="t.name"><svg viewBox="0 0 16 16" v-html="icons[t.name]" /></button>
                      <button v-if="t.drop" class="caret" :aria-label="t.name + ' ▾'"></button>
                    </div>
                  </div>
                  <ul class="legend">
                    <li v-for="l in legend" :key="l.tone"><i :class="l.tone"></i>{{ l.text }}</li>
                  </ul>
                </div>
              </div>
              <div class="sheet-tabs">
                <button v-for="n in 4" :key="n" class="nav" :aria-label="'Лист ' + n">{{ ['◂', '◂', '▸', '▸'][n - 1] }}</button>
                <button class="active">Модель</button>
                <button class="idle">Трехмерные виды</button>
              </div>
              <nav class="task-pane">
                <button v-for="(n, i) in paneTabs" :key="n" :class="{ active: i === 0 }" :aria-label="n"><svg viewBox="0 0 16 16" v-html="icons[n]" /></button>
              </nav>
            </section>

            <div class="minimized">
              <div v-for="d in docs" :key="d.text" class="mini">
                <svg class="kind" viewBox="0 0 16 16" v-html="icons[d.icon]" />
                <span>{{ d.text }}</span>
                <button aria-label="Восстановить"><svg viewBox="0 0 16 16"><path d="M2 7H10V13H2ZM6 7V3H14V10H10" fill="#fff" stroke="#4b5260" stroke-width="1.500" /></svg></button>
                <button aria-label="Развернуть"><svg viewBox="0 0 16 16"><path d="M3 3H13V12H3ZM6 7H10V9H6Z" fill="#fff" stroke="#4b5260" stroke-width="1.500" /></svg></button>
                <button aria-label="Закрыть"><svg viewBox="0 0 16 16"><path d="M3 3L13 13M13 3L3 13" stroke="#4b5260" stroke-width="4" /><path d="M4 4L12 12M12 4L4 12" stroke="#fff" stroke-width="2" /></svg></button>
              </div>
            </div>
          </div>
        </div>
      </div>

      <aside class="right">
        <div class="vbar">
          <template v-for="(t, i) in rightBar" :key="i">
            <span v-if="t.sep" class="sep"></span>
            <div v-else class="tool" :class="{ off: t.off }">
              <button class="ico" :aria-label="t.name"><svg viewBox="0 0 16 16" v-html="icons[t.name]" /></button>
              <button v-if="t.drop" class="caret" :aria-label="t.name + ' ▾'"></button>
            </div>
          </template>
        </div>
      </aside>
    </div>

    <div class="filter-row">
      <div class="bar filters">
        <template v-for="(t, i) in filterBar" :key="i">
          <span v-if="t.sep" class="sep"></span>
          <div v-else class="tool" :class="{ off: t.off, on: t.on }">
            <button class="ico" :aria-label="t.name"><svg viewBox="0 0 16 16" v-html="icons[t.name]" /></button>
            <button v-if="t.drop" class="caret" :aria-label="t.name + ' ▾'"></button>
          </div>
        </template>
      </div>
    </div>

    <footer class="status">
      <span>SOLIDWORKS Premium 2018 SP5.0</span>
      <span class="mode">Редактируется Деталь</span>
      <span class="units">ММГС</span>
      <button class="caret up" aria-label="Единицы"></button>
      <svg viewBox="0 0 16 16" v-html="icons.stackGray" />
    </footer>

    <nav class="taskbar">
      <button v-for="a in apps" :key="a.icon" class="app-btn" :class="{ run: a.run, on: a.on }" :aria-label="a.icon"><svg viewBox="0 0 16 16" v-html="icons[a.icon]" /></button>
      <div class="tray">
        <button v-for="n in tray" :key="n" :aria-label="n"><svg viewBox="0 0 16 16" v-html="icons[n]" /></button>
        <time>13:21</time>
        <button class="notify" aria-label="Уведомления"><svg viewBox="0 0 16 16" v-html="icons.notify" /></button>
      </div>
    </nav>
  </div>
</template>

<style>
body { margin: 0; background: #d5d9dd; }
</style>

<style scoped>
* { box-sizing: border-box; }
.app {
  display: flex; flex-direction: column; min-height: 100vh; overflow: hidden;
  background: #d5d9dd; color: #222528;
  font-family: Roboto, "Noto Sans", sans-serif; font-size: 8px; line-height: 12px;
}
button { border: 0; padding: 0; margin: 0; background: none; font: inherit; color: inherit; display: flex; align-items: center; justify-content: center; white-space: nowrap; }
svg { width: 13px; height: 13px; flex: none; display: block; }
ul { list-style: none; margin: 0; padding: 0; }
input { border: 0; outline: 0; background: none; font: inherit; padding: 0; min-width: 0; }

.bar { display: flex; align-items: center; justify-content: space-between; }
.tool { display: flex; align-items: center; }
.ico { width: 17px; height: 17px; flex: none; }
.caret { width: 9px; height: 12px; display: flex; align-items: center; justify-content: center; flex: none; }
.caret::after { content: ""; border: 2px solid transparent; border-top-color: #222; border-bottom: 0; }
.caret.up::after { border: 2px solid transparent; border-bottom-color: #222; border-top: 0; }
.off { opacity: 0.4; filter: grayscale(1); }
.sep { flex: none; background: #a0a5aa; }
.bar .sep { width: 1px; height: 18px; }

.titlebar { height: 21px; display: flex; align-items: center; border-bottom: 1px solid #92979c; flex: none; }
.brand { width: 400px; height: 20px; background: #a7a9ac; display: flex; align-items: center; padding-left: 8px; flex: none; }
.logo { width: 95px; height: 20px; background: #fff; display: flex; align-items: center; gap: 3px; padding-left: 3px; flex: none; color: #cf2b2e; font-family: Lato, "Open Sans", sans-serif; font-size: 11px; }
.ds { width: 18px; height: 18px; }
.menus { display: flex; gap: 10px; margin-left: 19px; }
.pin { margin-left: auto; margin-right: 3px; }
.pin svg { width: 9px; height: 9px; }
.standard { width: 308px; margin-left: 9px; flex: none; }
.standard .tool.on, .filters .tool.on { border: 1px solid #8d9297; height: 18px; }
.tool.on .ico { background: #a2a6aa; }
.doc-name { flex: 1; text-align: center; }
.search { width: 166px; height: 16px; border: 1px solid #555a60; display: flex; align-items: center; gap: 2px; padding-left: 3px; background: #dfe2e5; flex: none; }
.search svg { width: 11px; height: 11px; }
.search .caret { width: 7px; }
.search input { flex: 1; color: #5b6066; }
.search input::placeholder { color: #5b6066; opacity: 1; }
.window-tools { width: 98px; display: flex; align-items: center; justify-content: space-between; padding: 0 1px 0 3px; flex: none; }
.window-tools svg { width: 10px; height: 10px; }

.command-row { height: 22px; border-bottom: 1px solid #92979c; flex: none; display: flex; }
.features { width: 622px; margin-left: 4px; }

.body { flex: 1; display: flex; min-height: 0; }
.main { flex: 1; display: flex; flex-direction: column; min-width: 0; }
.ribbon { height: 14px; background: #4a5868; display: flex; flex: none; }
.ribbon button { padding: 0 4px; background: #a7aaad; border-right: 1px solid #85898d; color: #33373a; }
.ribbon .active { background: #d5d9dd; border-color: #d5d9dd; color: #222; padding-left: 5px; }
.work { flex: 1; display: flex; min-height: 0; }
.left { width: 32px; flex: none; display: flex; flex-direction: column; border-top: 1px solid #b9bdc1; padding-bottom: 37px; }
.vbar { display: flex; flex-direction: column; justify-content: space-between; }
.vbar .tool { height: 17px; }
.vbar .sep { height: 1px; width: 100%; }
.vbar.top { height: 220px; padding: 4px 2px 3px; border-bottom: 1px solid #8f9499; }
.vbar.top .sep { margin: 0 1px; }
.vbar.bottom { flex: 1; width: 23px; padding: 5px 2px 4px; border-right: 1px solid #8f9499; border-bottom: 1px solid #8f9499; }
.vbar.bottom .on { outline: 1px solid #70757a; }
.vbar.bottom .on .ico { width: 18px; }

.mdi { flex: 1; display: flex; flex-direction: column; min-width: 0; background: #4a5868; padding-top: 2px; }
.doc { flex: 1; display: flex; flex-direction: column; position: relative; min-height: 0; background: #b7d0ea; border: 1px solid #1e2a36; border-right-color: #1d5570; border-radius: 4px 4px 0 0; padding: 0 4px 4px; }
.doc-title { height: 20px; margin: 0 -4px; padding: 4px 2px 0 5px; flex: none; display: flex; align-items: center; gap: 2px; position: relative; background: linear-gradient(#98b2d6, #bed1e9); border-radius: 3px 3px 0 0; }
.doc-title > svg { width: 11px; height: 11px; }
.pane-buttons { position: absolute; left: 416px; top: 6px; display: flex; gap: 2px; }
.pane-buttons button, .doc-buttons button { width: 21px; height: 11px; border: 1px solid #6a84aa; border-radius: 2px; background: linear-gradient(#c4d5ec, #93aed3); }
.pane-buttons svg, .doc-buttons svg { width: 9px; height: 9px; }
.doc-buttons { margin-left: auto; display: flex; gap: 2px; padding-right: 4px; }
.doc-buttons .close { background: linear-gradient(#dd8271, #bf3a26); border-color: #7d3028; }
.doc-body { flex: 1; display: flex; min-height: 0; }
.panel { width: 229px; flex: none; background: #d5d9dd; display: flex; flex-direction: column; border-right: 1px solid #8d9297; }
.grip { height: 11px; margin: 1px 1px 3px 0; border: solid #a2a7ac; border-width: 1px 0; display: flex; align-items: center; justify-content: center; flex: none; }
.grip i { width: 4px; height: 4px; border: 1px solid #999; border-radius: 50%; margin-right: 3px; }
.panel-head { height: 17px; display: flex; flex: none; }
.ptab { width: 27px; background: #a5a8ac; border-right: 1px solid #85898d; }
.ptab.active { background: #d5d9dd; }
.ptab svg { width: 12px; height: 12px; }
.display-tools { flex: 1; display: flex; align-items: center; justify-content: flex-end; }
.display-tools svg { width: 12px; height: 12px; }
.display-tools .ico:first-child svg { width: 8px; height: 8px; }
.panel-cols { flex: 1; display: flex; min-height: 0; }
.tree-col { width: 160px; flex: none; display: flex; flex-direction: column; }
.filter { height: 16px; margin: 0 3px 0 2px; background: #f0f1f2; border: 1px solid #fafafa; display: flex; align-items: center; flex: none; padding-left: 1px; }
.filter svg { width: 12px; height: 12px; }
.filter input { flex: 1; }
.root { height: 18px; border-bottom: 2px solid #e0ad2c; display: flex; align-items: center; gap: 3px; padding-left: 1px; white-space: nowrap; flex: none; }
.root svg { width: 12px; height: 12px; }
.tree { display: grid; grid-template-rows: repeat(12, 1fr); height: 176px; flex: none; }
.tree li { display: flex; align-items: center; gap: 3px; padding-left: 4px; white-space: nowrap; min-height: 0; }
.tree li svg { width: 12px; height: 12px; }
.tree-col .tree { border-bottom: 2px solid #3b84b4; }
.twisty { width: 9px; height: 6px; }
.twisty.shown::before { content: ""; display: block; width: 0; margin-left: 1px; border: 3px solid transparent; border-left-color: #4b5054; border-right: 0; }
.hscroll { height: 12px; margin-top: auto; background: #f1f2f3; display: flex; align-items: center; padding: 0 3px; flex: none; }
.hscroll .thumb { width: 67px; height: 10px; background: #c9cbcd; margin-left: 2px; }
.arr { width: 4px; height: 4px; border: solid #333; border-width: 0 0 1px 1px; transform: rotate(45deg); margin-left: 1px; }
.arr.r { transform: rotate(225deg); margin-left: auto; }
.display-col { width: 16px; border-left: 1px solid #b5babf; }
.display-col.first { width: 19px; padding-top: 34px; }
.display-col.last { width: 17px; }
.display-col.look { padding-top: 18px; }
.swatch { display: block; width: 14px; height: 13px; border: 1px solid #4f5458; background: radial-gradient(circle, #a6dcdc 0 3px, #fff 5px); }

.viewport { flex: 1; position: relative; min-width: 0; overflow: hidden; border-bottom: 1px solid #b3b8bd; }
.model { width: 100%; height: 100%; }
.edge { fill: none; stroke: #1c1c1c; stroke-width: 1px; opacity: 0.7; }
.readout { font: 10px "Liberation Sans", Arial, sans-serif; fill: #453c45; }
.axis { font: 9px "Liberation Sans", Arial, sans-serif; fill: #225; }
.axis.x { fill: #b22; }
.handle { position: absolute; left: 0; top: 48%; width: 5px; height: 25px; background: #d5d9dd; }
.handle::after { content: ""; position: absolute; left: 0; top: 11px; width: 3px; height: 3px; border: 1px solid #888; border-radius: 50%; }
.view { position: absolute; left: 369px; top: 2px; width: 235px; opacity: 0.75; }
.view .ico { height: 16px; width: 16px; }
.view svg { width: 12px; height: 12px; }
.view .caret::after { border-top-color: #176b17; opacity: 0.5; }
.legend { position: absolute; right: 38px; bottom: 5px; font: 10px/17px "Liberation Sans", Arial, sans-serif; color: #3b3d40; }
.legend li { display: flex; align-items: center; gap: 4px; }
.legend i { width: 20px; height: 13px; }
.green { background: #0f0; }
.yellow { background: #ff0; }
.red { background: #f00; }
.sheet-tabs { height: 10px; flex: none; background: #d5d9dd; display: flex; line-height: 10px; }
.sheet-tabs .nav { width: 11px; background: #a8abae; border: 1px solid #8f9397; color: #777; }
.sheet-tabs .active { padding: 0 8px; font-weight: bold; border-right: 1px solid #777; }
.sheet-tabs .idle { background: #a8abae; padding: 0 11px 0 7px; }
.task-pane { position: absolute; right: 0; top: 17px; width: 16px; background: #a8abae; border: solid #8b8f93; border-width: 0 0 1px 1px; }
.task-pane button { width: 15px; height: 16px; border-bottom: 1px solid #8b8f93; }
.task-pane .active { background: #eceef0; }
.task-pane svg { width: 12px; height: 12px; }

.minimized { height: 17px; display: flex; gap: 1px; flex: none; margin: 1px 0 2px; }
.mini { width: 106px; display: flex; align-items: center; gap: 2px; padding: 0 4px 0 3px; background: linear-gradient(#d6deea, #b9c7dd); border-radius: 3px 3px 0 0; color: #8b929c; }
.mini .kind { width: 12px; height: 12px; }
.mini span { flex: 1; }
.mini button { width: 21px; height: 12px; border: 1px solid #8196bd; }
.mini button svg { width: 9px; height: 9px; }

.right { width: 32px; flex: none; padding: 0 0 59px 3px; border-left: 1px solid #c2c6ca; }
.right .vbar { height: 100%; padding: 3px 0 5px; border-bottom: 1px solid #a6abb0; }

.filter-row { height: 22px; flex: none; display: flex; border-bottom: 1px solid #8d9297; }
.filters { flex: 1; margin: 0 46px 0 4px; border-right: 1px solid #a0a5aa; padding-right: 4px; }
.status { height: 13px; flex: none; display: flex; align-items: center; padding: 0 2px 0 1px; }
.mode { margin-left: auto; }
.units { margin-left: 43px; }
.status .caret { margin: 0 40px 0 14px; }
.status svg { width: 11px; height: 11px; }

.taskbar { height: 20px; flex: none; display: flex; background: linear-gradient(90deg, #123a63 0, #12386a 18%, #0f3a6c 30%, #1b5584 37%, #164a7d 43%, #3f78ae 54%, #3a6ba0 60%, #5382ab 66%, #3d6ea4 73%, #4575ab 77%, #23507f 84%, #2b5888 92%, #2e5b88 100%); }
.app-btn { width: 25px; height: 20px; border-bottom: 2px solid transparent; }
.app-btn.run { border-bottom-color: #7db8ea; border-right: 2px solid transparent; background-clip: padding-box; }
.app-btn.on { background-color: #3b6b96; }
.app-btn svg { width: 11px; height: 11px; }
.tray { margin-left: auto; display: flex; align-items: center; color: #fff; padding-right: 12px; }
.tray button { width: 16px; height: 20px; }
.tray svg { width: 11px; height: 11px; }
.tray time { margin: 0 11px 0 4px; }
.tray .notify svg { width: 12px; height: 12px; }
</style>
